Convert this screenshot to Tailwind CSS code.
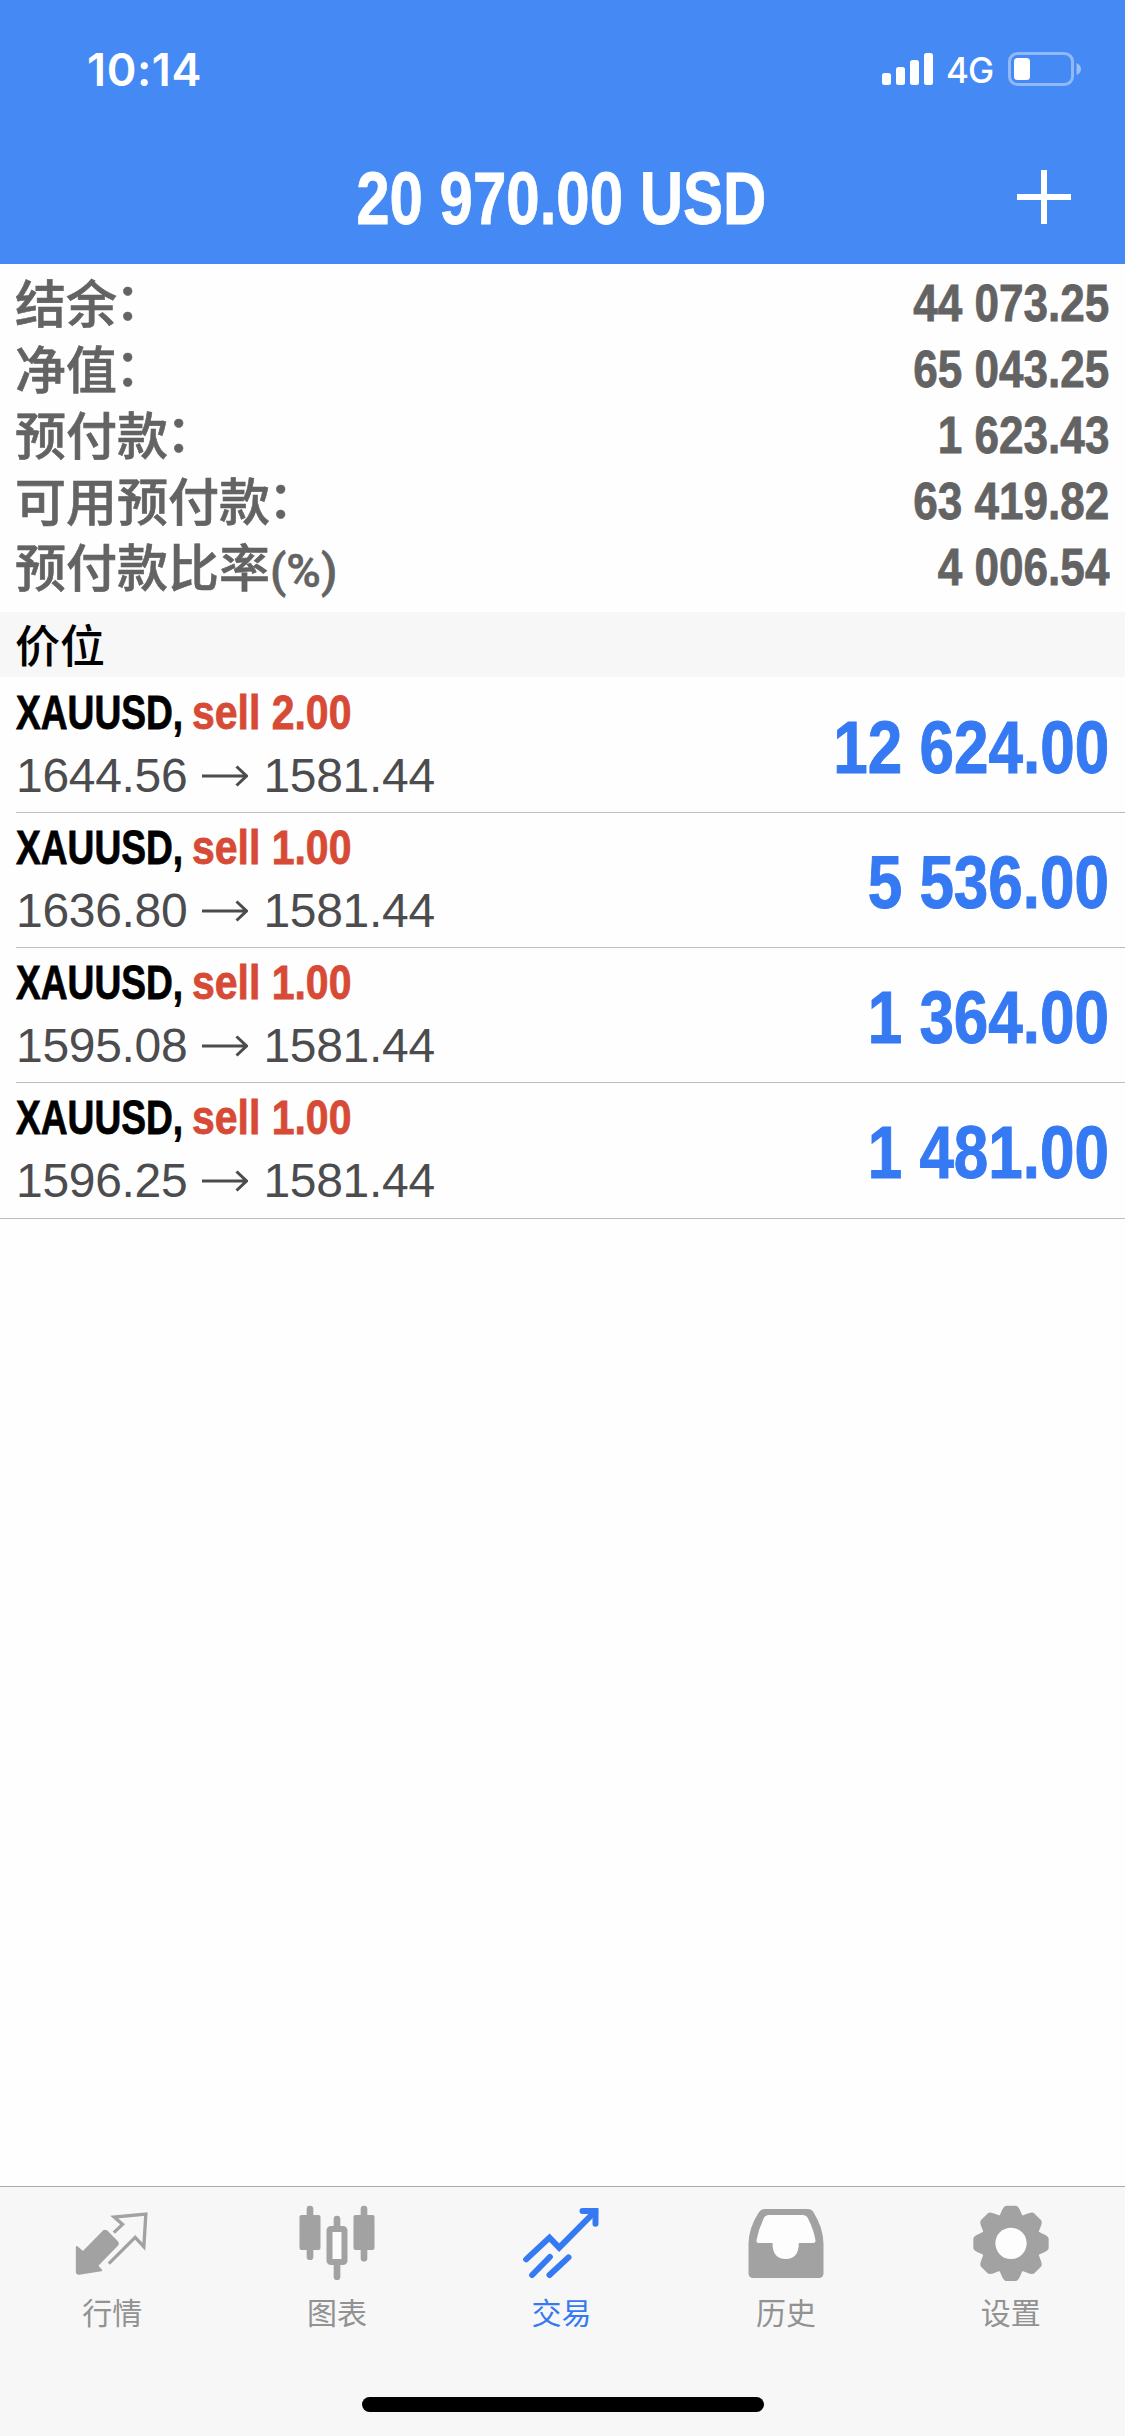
<!DOCTYPE html>
<html lang="zh-CN">
<head>
<meta charset="utf-8">
<title>交易</title>
<script src="https://cdn.jsdelivr.net/npm/@tailwindcss/browser@4"></script>
</head>
<body class="bg-[#fefefe]">
<div class="flex h-[2436px] w-[1125px] flex-col overflow-hidden font-['Liberation_Sans','Noto_Sans_CJK_SC',sans-serif] whitespace-nowrap">

  <header class="flex h-[264px] shrink-0 flex-col bg-[#458af4] text-white">
    <div class="flex h-[138px] items-center justify-between pl-[87px] pr-[44px]">
      <span class="font-['Inter',sans-serif] text-[45px] font-semibold leading-none tracking-[0.6px]">10:14</span>
      <div class="flex items-center">
        <svg class="h-[32px] w-[51px]" viewBox="0 0 51 32" fill="currentColor"><rect x="0" y="20" width="9" height="12" rx="2.5"/><rect x="14" y="14" width="9" height="18" rx="2.5"/><rect x="28" y="7" width="9" height="25" rx="2.5"/><rect x="42" y="0" width="9" height="32" rx="2.5"/></svg>
        <span class="ml-[13px] w-[50px] pt-[2px] font-['Inter',sans-serif] text-[35px] font-medium leading-none tracking-[-1px]">4G</span>
        <svg class="ml-[12px] h-[34px] w-[73px]" viewBox="0 0 73 34"><rect x="1.5" y="1.5" width="63" height="31" rx="8" fill="none" stroke="#fff" stroke-opacity=".4" stroke-width="3"/><rect x="6" y="6" width="16" height="22" rx="3.5" fill="#fff"/><path d="M68.500 11q4.500 2 4.500 6t-4.500 6z" fill="#fff" fill-opacity=".45"/></svg>
      </div>
    </div>
    <div class="grid h-[126px] grid-cols-[200px_1fr_200px] items-start">
      <span></span>
      <h1 class="scale-x-80 pt-[20px] pr-[3px] text-center text-[75px] font-bold leading-[80px] [-webkit-text-stroke:0.8px]">20 970.00 USD</h1>
      <svg class="mt-[32px] mr-[54px] h-[54px] w-[54px] justify-self-end" viewBox="0 0 54 54" stroke="#fff" stroke-width="6"><path d="M27 0v54M0 27h54"/></svg>
    </div>
  </header>

  <section class="flex h-[348px] shrink-0 flex-col pt-[6px] pr-4 pl-[15px] text-[#636363]">
    <div class="flex h-[66px] items-center justify-between"><span class="-mt-[5px] font-['Noto_Sans_CJK_SC',sans-serif] text-[51px] font-medium leading-[66px] [-webkit-text-stroke:0.6px]">结余<span class="relative -top-[3px] -left-[2px] leading-none">：</span></span><span class="origin-right scale-x-[0.848] text-[52px] font-bold [-webkit-text-stroke:0.8px]">44 073.25</span></div>
    <div class="flex h-[66px] items-center justify-between"><span class="-mt-[5px] font-['Noto_Sans_CJK_SC',sans-serif] text-[51px] font-medium leading-[66px] [-webkit-text-stroke:0.6px]">净值<span class="relative -top-[3px] -left-[2px] leading-none">：</span></span><span class="origin-right scale-x-[0.848] text-[52px] font-bold [-webkit-text-stroke:0.8px]">65 043.25</span></div>
    <div class="flex h-[66px] items-center justify-between"><span class="-mt-[5px] font-['Noto_Sans_CJK_SC',sans-serif] text-[51px] font-medium leading-[66px] [-webkit-text-stroke:0.6px]">预付款<span class="relative -top-[3px] -left-[2px] leading-none">：</span></span><span class="origin-right scale-x-[0.848] text-[52px] font-bold [-webkit-text-stroke:0.8px]">1 623.43</span></div>
    <div class="flex h-[66px] items-center justify-between"><span class="-mt-[5px] font-['Noto_Sans_CJK_SC',sans-serif] text-[51px] font-medium leading-[66px] [-webkit-text-stroke:0.6px]">可用预付款<span class="relative -top-[3px] -left-[2px] leading-none">：</span></span><span class="origin-right scale-x-[0.848] text-[52px] font-bold [-webkit-text-stroke:0.8px]">63 419.82</span></div>
    <div class="flex h-[66px] items-center justify-between"><span class="-mt-[5px] font-['Noto_Sans_CJK_SC',sans-serif] text-[51px] font-medium leading-[66px] [-webkit-text-stroke:0.6px]">预付款比率<span class="font-['Roboto',sans-serif] text-[47px] leading-none">(%)</span></span><span class="origin-right scale-x-[0.848] text-[52px] font-bold [-webkit-text-stroke:0.8px]">4 006.54</span></div>
  </section>

  <h2 class="flex h-[65px] shrink-0 items-center bg-[#f7f7f7] pb-[2px] pl-[15px] font-['Noto_Sans_CJK_SC',sans-serif] text-[45px] font-medium leading-[63px] text-black">价位</h2>

  <main class="flex-1">
    <div class="ml-4 flex h-[136px] items-start justify-between border-b border-[#bdbdbf] pt-[4px] pr-4">
      <div class="flex flex-col">
        <p class="flex text-[49px] font-bold leading-[63px] text-black [-webkit-text-stroke:0.8px]"><span class="w-[176px]"><span class="inline-block origin-left scale-x-[0.758]">XAUUSD,</span></span><span class="inline-block origin-left scale-x-[0.836] text-[#d64a36]">sell 2.00</span></p>
        <p class="flex items-center text-[48px] leading-[63px] tracking-[-0.3px] text-[#4c4c4e]">1644.56<svg class="ml-[15px] mr-[15px] h-[22px] w-[46px]" viewBox="0 0 46 22" fill="none" stroke="currentColor" stroke-width="3"><path d="M0 11h44M34.500 1.500L44.500 11L34.500 20.500"/></svg>1581.44</p>
      </div>
      <span class="mt-[30px] origin-right scale-x-[0.838] text-[74px] font-bold leading-none text-[#3579f3] [-webkit-text-stroke:1px]">12 624.00</span>
    </div>
    <div class="ml-4 flex h-[135px] items-start justify-between border-b border-[#bdbdbf] pt-[3px] pr-4">
      <div class="flex flex-col">
        <p class="flex text-[49px] font-bold leading-[63px] text-black [-webkit-text-stroke:0.8px]"><span class="w-[176px]"><span class="inline-block origin-left scale-x-[0.758]">XAUUSD,</span></span><span class="inline-block origin-left scale-x-[0.836] text-[#d64a36]">sell 1.00</span></p>
        <p class="flex items-center text-[48px] leading-[63px] tracking-[-0.3px] text-[#4c4c4e]">1636.80<svg class="ml-[15px] mr-[15px] h-[22px] w-[46px]" viewBox="0 0 46 22" fill="none" stroke="currentColor" stroke-width="3"><path d="M0 11h44M34.500 1.500L44.500 11L34.500 20.500"/></svg>1581.44</p>
      </div>
      <span class="mt-[30px] origin-right scale-x-[0.838] text-[74px] font-bold leading-none text-[#3579f3] [-webkit-text-stroke:1px]">5 536.00</span>
    </div>
    <div class="ml-4 flex h-[135px] items-start justify-between border-b border-[#bdbdbf] pt-[3px] pr-4">
      <div class="flex flex-col">
        <p class="flex text-[49px] font-bold leading-[63px] text-black [-webkit-text-stroke:0.8px]"><span class="w-[176px]"><span class="inline-block origin-left scale-x-[0.758]">XAUUSD,</span></span><span class="inline-block origin-left scale-x-[0.836] text-[#d64a36]">sell 1.00</span></p>
        <p class="flex items-center text-[48px] leading-[63px] tracking-[-0.3px] text-[#4c4c4e]">1595.08<svg class="ml-[15px] mr-[15px] h-[22px] w-[46px]" viewBox="0 0 46 22" fill="none" stroke="currentColor" stroke-width="3"><path d="M0 11h44M34.500 1.500L44.500 11L34.500 20.500"/></svg>1581.44</p>
      </div>
      <span class="mt-[30px] origin-right scale-x-[0.838] text-[74px] font-bold leading-none text-[#3579f3] [-webkit-text-stroke:1px]">1 364.00</span>
    </div>
    <div class="flex h-[136px] items-start justify-between border-b border-[#bdbdbf] px-4 pt-[3px]">
      <div class="flex flex-col">
        <p class="flex text-[49px] font-bold leading-[63px] text-black [-webkit-text-stroke:0.8px]"><span class="w-[176px]"><span class="inline-block origin-left scale-x-[0.758]">XAUUSD,</span></span><span class="inline-block origin-left scale-x-[0.836] text-[#d64a36]">sell 1.00</span></p>
        <p class="flex items-center text-[48px] leading-[63px] tracking-[-0.3px] text-[#4c4c4e]">1596.25<svg class="ml-[15px] mr-[15px] h-[22px] w-[46px]" viewBox="0 0 46 22" fill="none" stroke="currentColor" stroke-width="3"><path d="M0 11h44M34.500 1.500L44.500 11L34.500 20.500"/></svg>1581.44</p>
      </div>
      <span class="mt-[30px] origin-right scale-x-[0.838] text-[74px] font-bold leading-none text-[#3579f3] [-webkit-text-stroke:1px]">1 481.00</span>
    </div>
  </main>

  <footer class="flex h-[250px] shrink-0 flex-col items-center border-t border-[#a9a9a9] bg-[#f7f7f7] pb-[24px]">
    <nav class="grid w-full grid-cols-5 pt-[15px] pr-[2px] font-['Noto_Sans_CJK_SC',sans-serif] text-[30px] leading-[44px] text-[#929292]">
      <a class="flex flex-col items-center gap-[3px]">
        <svg class="ml-[2px] h-[84px] w-[84px]" viewBox="211.5 96 252 252">
          <path d="M229 231L247 247L309 184Q314 180 319 184L350 216Q354 221 350 225L290 287L302 301L236 311Q229 312 229 305Z" fill="#a2a2a2" stroke="#a2a2a2" stroke-width="6" stroke-linejoin="round"/>
          <path d="M340 188L366 163L341 141L436 132L430 230L404 202L325 281" fill="none" stroke="#a2a2a2" stroke-width="10"/>
        </svg>行情
      </a>
      <a class="flex flex-col items-center gap-[3px]">
        <svg class="ml-[2px] h-[84px] w-[84px]" viewBox="886.5 96 252 252">
          <path d="M928.500 117v143M1090.500 117v148M1009.500 147v26M1009.500 284v36" stroke="#a2a2a2" stroke-width="20" stroke-linecap="round"/>
          <rect x="897" y="135" width="63" height="105" rx="6" fill="#a2a2a2"/><rect x="1059" y="135" width="63" height="105" rx="6" fill="#a2a2a2"/>
          <rect x="987" y="177" width="45" height="99" rx="4" fill="#fbfbfb" stroke="#a2a2a2" stroke-width="18"/>
        </svg>图表
      </a>
      <a class="flex flex-col items-center gap-[3px] text-[#3579f3]">
        <svg class="ml-[2px] h-[84px] w-[84px]" viewBox="301.5 96 252 252" fill="none" stroke="#3579f3" stroke-width="18" stroke-linecap="round">
          <path d="M320 268L390 203L419 233L527 124M338 315L391 261M390 315L447 262"/><path d="M489 123H528V161"/>
        </svg>交易
      </a>
      <a class="flex flex-col items-center gap-[3px]">
        <svg class="ml-[2px] h-[84px] w-[84px]" viewBox="976.5 96 252 252">
          <path fill="#a2a2a2" d="M1036 117H1164Q1176 117 1182 127Q1212 175 1212 222V310Q1212 324 1198 324H1001Q987 324 987 310V222Q987 175 1018 127Q1024 117 1036 117Z"/>
          <path fill="#fdfdfd" d="M1049 135H1149Q1161 135 1166 146Q1183 180 1188 211Q1189 219 1181 219H1138Q1138 267 1098.500 267Q1059 267 1059 219H1017Q1010 219 1011 211Q1017 178 1032 146Q1037 135 1049 135Z"/>
        </svg>历史
      </a>
      <a class="flex flex-col items-center gap-[3px]">
        <svg class="ml-[2px] h-[84px] w-[84px]" viewBox="391.5 96 252 252">
          <defs><path id="tooth" d="M-39-76Q-33-84-29-95Q-22-113-14-113H14Q22-113 29-95Q33-84 39-76Z"/></defs>
          <g transform="translate(514.5 220)" fill="#a2a2a2">
            <circle r="87"/>
            <use href="#tooth"/><use href="#tooth" transform="rotate(45)"/><use href="#tooth" transform="rotate(90)"/><use href="#tooth" transform="rotate(135)"/><use href="#tooth" transform="rotate(180)"/><use href="#tooth" transform="rotate(225)"/><use href="#tooth" transform="rotate(270)"/><use href="#tooth" transform="rotate(315)"/>
            <circle r="47" fill="#fdfdfd"/>
          </g>
        </svg>设置
      </a>
    </nav>
    <div class="mt-auto h-[15px] w-[402px] rounded-full bg-black"></div>
  </footer>
</div>
</body>
</html>
